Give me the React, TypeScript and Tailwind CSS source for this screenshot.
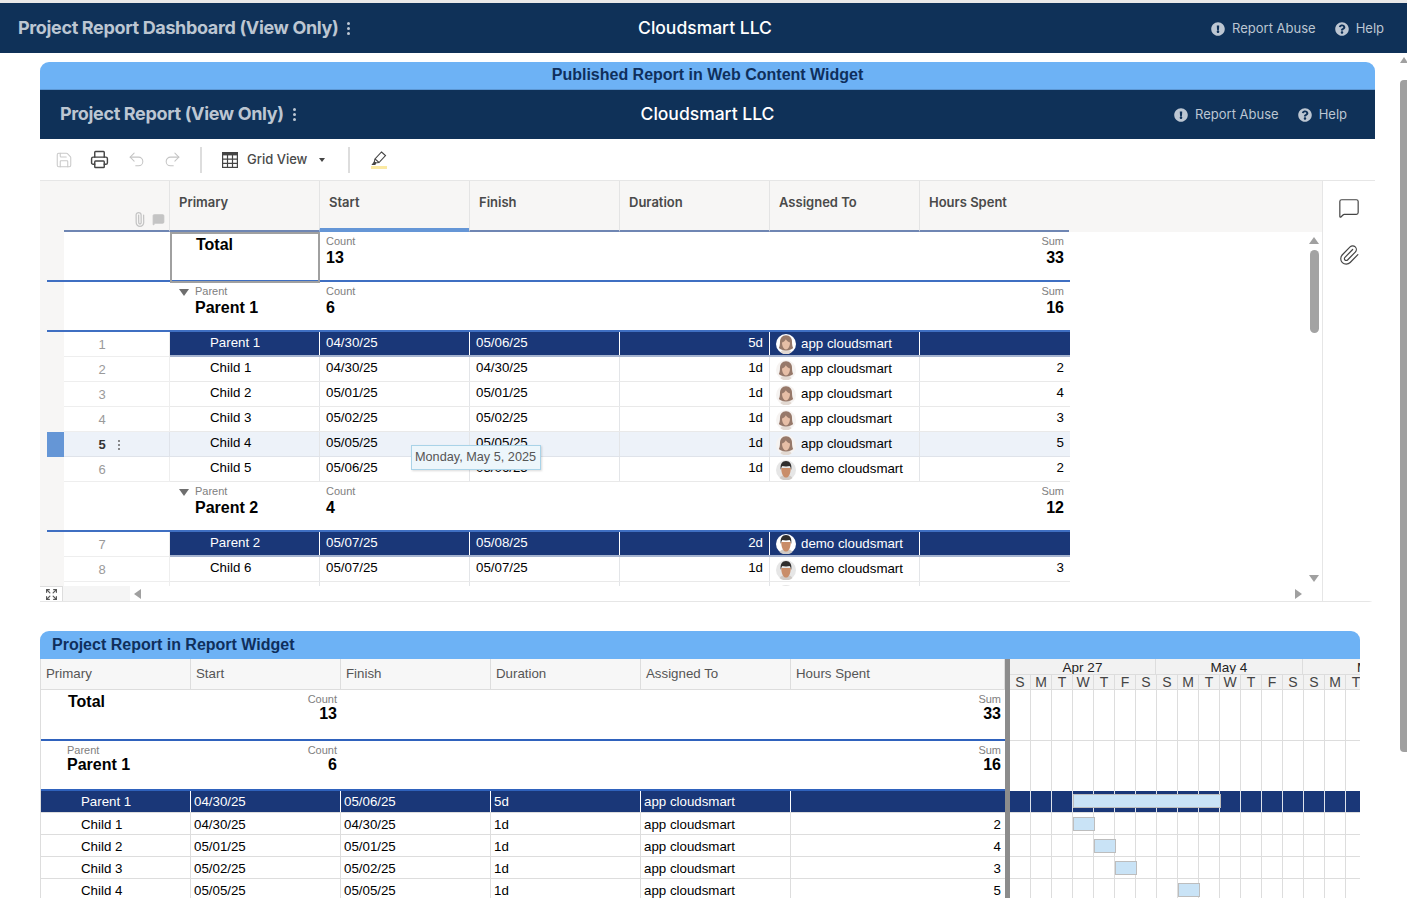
import { Expand, MessageSquare, Paperclip, Printer, Redo2, Save, Undo2 } from "lucide-react";
import { FaExclamationCircle, FaQuestionCircle } from "react-icons/fa";

type Row = { n: number; name: string; start: string; finish: string; dur: string; who: "app" | "demo"; hours?: string; parent?: boolean; active?: boolean; clipped?: boolean };

const topRows: Row[] = [
  { n: 1, name: "Parent 1", start: "04/30/25", finish: "05/06/25", dur: "5d", who: "app", parent: true },
  { n: 2, name: "Child 1", start: "04/30/25", finish: "04/30/25", dur: "1d", who: "app", hours: "2" },
  { n: 3, name: "Child 2", start: "05/01/25", finish: "05/01/25", dur: "1d", who: "app", hours: "4" },
  { n: 4, name: "Child 3", start: "05/02/25", finish: "05/02/25", dur: "1d", who: "app", hours: "3" },
  { n: 5, name: "Child 4", start: "05/05/25", finish: "05/05/25", dur: "1d", who: "app", hours: "5", active: true },
  { n: 6, name: "Child 5", start: "05/06/25", finish: "05/06/25", dur: "1d", who: "demo", hours: "2" },
];

// the last row only peeks out above the bottom strip, its text stays out of view
const lowerRows: Row[] = [
  { n: 7, name: "Parent 2", start: "05/07/25", finish: "05/08/25", dur: "2d", who: "demo", parent: true },
  { n: 8, name: "Child 6", start: "05/07/25", finish: "05/07/25", dur: "1d", who: "demo", hours: "3" },
  { n: 9, name: "", start: "", finish: "", dur: "", who: "demo", clipped: true },
];

const days = ["S", "M", "T", "W", "T", "F", "S", "S", "M", "T", "W", "T", "F", "S", "S", "M", "T"];

function Avatar({ who, ring, className }: { who: "app" | "demo"; ring?: boolean; className?: string }) {
  const bg = ring ? "#ffffff" : who === "app" ? "#f6f3f1" : "#e6e6e6";
  return (
    <svg width="20" height="20" viewBox="0 0 20 20" className={`shrink-0 ${className ?? ""}`}>
      <circle cx="10" cy="10" r="10" fill={bg} />
      {who === "app" ? (
        <>
          <path d="M4.500 18.600c.8-2.400 2.800-3.400 5.500-3.400s4.700 1 5.500 3.400a10 10 0 0 1-11 0z" fill="#e2d9d2" />
          <path d="M10 1.200c-4 0-6 3-6 6.600 0 3-.5 5-1.200 6.200 1.600 1.600 4.200 2.400 7.200 2.400s5.600-.8 7.200-2.400c-.7-1.200-1.200-3.200-1.200-6.200 0-3.600-2-6.600-6-6.600z" fill="#97796a" />
          <path d="M6 8.400c0 4 2 7 4 7s4-3 4-7c-1.800-.4-3.400-1.600-4.200-3.200-.6 1.600-2 2.800-3.800 3.200z" fill="#e6bea6" />
        </>
      ) : (
        <>
          <path d="M3.500 18c1-2 3.400-3 6.500-3s5.500 1 6.500 3a10 10 0 0 1-13 0z" fill="#cfcac6" />
          <path d="M5.200 8c0 5.600 2.200 9.600 4.800 9.600s4.800-4 4.800-9.600z" fill="#c98d69" />
          <path d="M4.800 10C3.800 4 6.400 1 10 1s6.200 3 5.200 9c-.3-2-.9-3.400-1.600-3.900-2 .6-5.200.6-7.200 0-.7.500-1.300 1.900-1.600 3.900z" fill="#2f2d2c" />
        </>
      )}
    </svg>
  );
}

function NavBar({ title, px, shift }: { title: string; px: string; shift: string }) {
  return (
    <div className={`grid grid-cols-[1fr_auto_1fr] items-center h-full bg-[#0f3158] ${px}`}>
      <div className="flex items-center gap-[7px] pb-[2px] font-['Inter',sans-serif] text-[18px] font-bold tracking-[-0.35px] text-[#bcc6d2]">
        {title}
        <span className="flex flex-col gap-[2px] ml-[2px] mt-[2px]">
          <i className="w-[3px] h-[3px] rounded-full bg-[#bcc6d2]" />
          <i className="w-[3px] h-[3px] rounded-full bg-[#bcc6d2]" />
          <i className="w-[3px] h-[3px] rounded-full bg-[#bcc6d2]" />
        </span>
      </div>
      <div className={`font-['Inter',sans-serif] text-[17.500px] font-medium text-white ${shift}`}>Cloudsmart LLC</div>
      <div className="flex justify-end items-center gap-[19px] pt-px font-['Inter',sans-serif] text-[13px] text-[#bcc6d2]">
        <span className="flex items-center gap-[7px]">
          <FaExclamationCircle size={14} />
          Report Abuse
        </span>
        <span className="flex items-center gap-[7px]">
          <FaQuestionCircle size={14} />
          Help
        </span>
      </div>
    </div>
  );
}

function Toolbar() {
  return (
    <div className="flex items-center h-[42px] pl-[15px] bg-white border-b border-[#e6e6e6]">
      <Save size={18} strokeWidth={1.4} className="text-[#c9c9c9]" />
      <Printer size={19} strokeWidth={1.8} className="ml-[17px] text-[#444444]" />
      <Undo2 size={19} strokeWidth={1.3} className="ml-[18px] text-[#c4c4c4]" />
      <Redo2 size={19} strokeWidth={1.3} className="ml-[17px] text-[#c4c4c4]" />
      <div className="ml-[18px] w-[2px] h-[26px] bg-[#dddddd]" />
      <svg width="18" height="18" viewBox="0 0 18 18" fill="none" stroke="#444444" strokeWidth="1.200" className="ml-[19px]">
        <rect x="1.600" y="1.600" width="14.800" height="14.800" />
        <path d="M1.600 3.200h14.800" strokeWidth="2.400" />
        <path d="M1.600 8.200h14.800M1.600 12.300h14.800M6.500 4v12.400M11.500 4v12.400" />
      </svg>
      <span className="ml-[8px] font-['Inter',sans-serif] text-[13px] font-medium text-[#4a4a4a]">Grid View</span>
      <span className="ml-[12px] w-0 h-0 border-x-[3px] border-x-transparent border-t-[4px] border-t-[#444444]" />
      <div className="ml-[23px] w-[2px] h-[26px] bg-[#dddddd]" />
      <div className="ml-[20px] flex flex-col items-center">
        <svg width="17" height="15" viewBox="0 0 17 15" fill="none" stroke="#444444" strokeWidth="1.100">
          <path d="M11.500 1l4 3.500-6.500 7-4-3.500z" />
          <path d="M5 8l-.7 3 1.200 1 3.500-.5" />
          <path d="M4.300 11l-1.800 2.500h2.500l.5-1.500z" fill="#444444" />
        </svg>
        <i className="w-[16px] h-[3px] bg-[#fbe9a3]" />
      </div>
    </div>
  );
}

function GroupRow({ label, name, count, sum }: { label?: string; name: string; count: string; sum: string }) {
  const isTotal = !label;
  return (
    <div className="flex h-[50px] shrink-0 font-['Liberation_Sans',sans-serif]">
      <div className="w-[17px] h-full bg-[#f7f6f5] border-b-2 border-[#3f6fc2]" />
      <div className="flex w-[1006px] bg-white border-b-2 border-[#3f6fc2]">
        <div className="w-[106px]" />
        {isTotal ? (
          <div className="relative w-[150px] h-[51px] border-2 border-[#a0a0a0] pl-[24px] pt-[1px] text-[16px] font-bold text-black leading-[20px]">{name}</div>
        ) : (
          <div className="w-[150px] pl-[9px] flex">
            <span className="mt-[7px] w-0 h-0 border-x-[5px] border-x-transparent border-t-[7px] border-t-[#6e6e6e]" />
            <div className="ml-[6px] pt-[3px]">
              <div className="text-[11px] leading-[12px] text-[#808080]">{label}</div>
              <div className="mt-px text-[16px] leading-[20px] font-bold text-black">{name}</div>
            </div>
          </div>
        )}
        <div className="w-[150px] pl-[6px] pt-[3px]">
          <div className="text-[11px] leading-[12px] text-[#808080]">Count</div>
          <div className="mt-px text-[16px] leading-[20px] font-bold text-black">{count}</div>
        </div>
        <div className="w-[600px] pr-[6px] pt-[3px] text-right">
          <div className="text-[11px] leading-[12px] text-[#808080]">Sum</div>
          <div className="mt-px text-[16px] leading-[20px] font-bold text-black">{sum}</div>
        </div>
      </div>
    </div>
  );
}

function DataRow({ row }: { row: Row }) {
  const cell = row.parent
    ? "border-r border-white text-white"
    : "border-r border-[#e3e5e8] text-black";
  const base = row.parent ? "bg-[#1a3778] border-b-2 border-b-[#a5b3cf]" : row.active ? "bg-[#edf2f9] border-b border-[#dfe3ea]" : "bg-white border-b border-[#e9e9e9]";
  return (
    <div className="flex h-[25px] shrink-0 font-['Liberation_Sans',sans-serif] text-[13.300px]">
      <div className={`w-[17px] ${row.active ? "bg-[#6596d6] border-b border-[#6596d6]" : "bg-[#f7f6f5]"}`} />
      <div className={`flex items-center w-[106px] pt-[2px] border-b border-r ${row.active ? "bg-[#edf2f9] border-[#dfe3ea]" : "bg-white border-[#eeeeee]"}`}>
        {!row.clipped && (
          <span className={`w-[76px] text-center text-[13px] ${row.active ? "font-bold text-[#333333]" : "text-[#9a9a9a]"}`}>{row.n}</span>
        )}
        {row.active && (
          <span className="-ml-[22px] flex flex-col gap-[2px]">
            <i className="w-[2px] h-[2px] rounded-full bg-[#666666]" />
            <i className="w-[2px] h-[2px] rounded-full bg-[#666666]" />
            <i className="w-[2px] h-[2px] rounded-full bg-[#666666]" />
          </span>
        )}
      </div>
      <div className={`flex w-[900px] ${base}`}>
        <div className={`w-[150px] pl-[40px] leading-[22px] ${cell}`}>{row.name}</div>
        <div className={`w-[150px] pl-[6px] leading-[22px] ${cell}`}>{row.start}</div>
        <div className={`w-[150px] pl-[6px] leading-[22px] ${cell}`}>{row.finish}</div>
        <div className={`w-[150px] pr-[6px] text-right leading-[22px] ${cell}`}>{row.dur}</div>
        <div className={`flex items-center gap-[5px] w-[150px] pl-[6px] ${cell}`}>
          <Avatar who={row.who} ring={row.parent} className={row.parent ? "" : "mt-[2px]"} />
          {!row.clipped && `${row.who} cloudsmart`}
        </div>
        <div className={`w-[150px] pr-[6px] text-right leading-[22px] ${row.parent ? "text-white" : "text-black"}`}>{row.hours}</div>
      </div>
    </div>
  );
}

function SheetGrid() {
  const heads = ["Primary", "Start", "Finish", "Duration", "Assigned To", "Hours Spent"];
  return (
    <div className="flex h-[421px] border-b border-[#e6e6e6] rounded-br-[6px]">
      <div className="flex-1 flex flex-col min-w-0">
        <div className="flex h-[51px] shrink-0 bg-[#f7f6f5]">
          <div className="w-[24px]" />
          <div className="relative w-[105px] border-b-2 border-[#6f86b3]">
            <Paperclip size={15} strokeWidth={2} className="absolute left-[68px] top-[31px] -rotate-45 text-[#c4c4c4]" />
            <MessageSquare size={13} fill="#c4c4c4" strokeWidth={1.5} className="absolute left-[88px] top-[32px] text-[#c4c4c4]" />
          </div>
          {heads.map((h, i) => (
            <div
              key={h}
              className={`w-[150px] pl-[9px] pt-[12px] font-['Inter',sans-serif] text-[13px] font-semibold text-[#4a4a4a] border-l border-[#e4e4e4] ${i === 1 ? "border-b-[4px] border-b-[#6596d6]" : "border-b-2 border-b-[#6f86b3]"}`}
            >
              {h}
            </div>
          ))}
        </div>
        <div className="flex flex-1 min-h-0 relative">
          <div className="w-[7px] bg-[#f7f6f5]" />
          <div className="w-[1023px] h-[354px] overflow-hidden flex flex-col">
            <GroupRow name="Total" count="13" sum="33" />
            <GroupRow label="Parent" name="Parent 1" count="6" sum="16" />
            {topRows.map((r) => (
              <DataRow key={r.n} row={r} />
            ))}
            <GroupRow label="Parent" name="Parent 2" count="4" sum="12" />
            {lowerRows.map((r) => (
              <DataRow key={r.n} row={r} />
            ))}
          </div>
          <div className="flex-1" />
          <div className="w-[12px] mr-[2px] h-[354px] flex flex-col items-center pt-[5px]">
            <span className="w-0 h-0 border-x-[5px] border-x-transparent border-b-[7px] border-b-[#a0a0a0]" />
            <span className="mt-[6px] w-[9px] h-[83px] rounded-[5px] bg-[#a3a3a3]" />
            <span className="mt-auto mb-[4px] w-0 h-0 border-x-[5px] border-x-transparent border-t-[7px] border-t-[#a0a0a0]" />
          </div>
          <div className="absolute left-[371px] top-[213px] w-[130px] h-[25px] border border-[#a9d3e8] bg-[#edf6fb] shadow-[1px_1px_2px_rgba(0,0,0,0.15)] pl-[3px] font-['Liberation_Sans',sans-serif] text-[12.700px] leading-[22px] text-[#555555]">
            Monday, May 5, 2025
          </div>
        </div>
        <div className="flex items-center h-[15px] shrink-0">
          <div className="flex items-center justify-center w-[23px] h-full border-r border-t border-[#dddddd] bg-white">
            <Expand size={13} strokeWidth={2.2} className="text-[#555555]" />
          </div>
          <div className="w-[67px] h-full bg-[#f5f5f5]" />
          <span className="ml-[4px] w-0 h-0 border-y-[5px] border-y-transparent border-r-[7px] border-r-[#a0a0a0]" />
          <span className="ml-auto mr-[20px] w-0 h-0 border-y-[5px] border-y-transparent border-l-[7px] border-l-[#a0a0a0]" />
        </div>
      </div>
      <div className="w-[53px] shrink-0 border-l border-[#e6e6e6] bg-white flex flex-col items-center pt-[16px]">
        <MessageSquare size={22} strokeWidth={1.3} className="text-[#444444]" />
        <Paperclip size={22} strokeWidth={1.3} className="mt-[25px] text-[#444444]" />
      </div>
    </div>
  );
}

function Gantt() {
  const dayLines = (bg: string, line: string, h: string) => (
    <div className={`flex ${h} ${bg}`}>
      {days.map((d, i) => (
        <div key={i} className={`w-[21px] shrink-0 border-r ${line}`} />
      ))}
    </div>
  );
  return (
    <div className="flex-1 min-w-0 overflow-hidden relative font-['Liberation_Sans',sans-serif]">
      <div className="flex h-[15px] bg-[#f2f2f2] text-[13.500px] leading-[18px] text-[#222222] text-center">
        <div className="w-[146px] shrink-0 border-r border-[#dddddd]">Apr 27</div>
        <div className="w-[147px] shrink-0 border-r border-[#dddddd]">May 4</div>
        <div className="w-[147px] shrink-0 pl-[54px] text-left">May 11</div>
      </div>
      <div className="flex h-[16px] bg-[#f2f2f2] border-b border-[#dddddd] text-[14px] leading-[15px] text-[#444444] text-center">
        {days.map((d, i) => (
          <div key={i} className="w-[21px] shrink-0 border-r border-t border-[#dddddd]">{d}</div>
        ))}
      </div>
      <div className="border-b border-[#dddddd]">{dayLines("bg-white", "border-[#dddddd]", "h-[50px]")}</div>
      <div>{dayLines("bg-white", "border-[#dddddd]", "h-[50px]")}</div>
      <div className="border-b border-[#dddddd]">{dayLines("bg-[#1a3778]", "border-[#dde2ec]", "h-[21px]")}</div>
      {[0, 1, 2, 3].map((i) => (
        <div key={i} className="border-b border-[#dddddd]">{dayLines("bg-white", "border-[#dddddd]", "h-[21px]")}</div>
      ))}
      <div className="absolute left-[63px] top-[135px] w-[148px] h-[14px] border border-[#bdbdbd] bg-[#c9e3f6]" />
      <div className="absolute left-[63px] top-[158px] w-[22px] h-[14px] border border-[#bdbdbd] bg-[#c9e3f6]" />
      <div className="absolute left-[84px] top-[180px] w-[22px] h-[14px] border border-[#bdbdbd] bg-[#c9e3f6]" />
      <div className="absolute left-[105px] top-[202px] w-[22px] h-[14px] border border-[#bdbdbd] bg-[#c9e3f6]" />
      <div className="absolute left-[168px] top-[224px] w-[22px] h-[14px] border border-[#bdbdbd] bg-[#c9e3f6]" />
    </div>
  );
}

function ReportTable() {
  const heads = ["Primary", "Start", "Finish", "Duration", "Assigned To", "Hours Spent"];
  const rows = topRows.slice(0, 5);
  const group = (label: string | null, name: string, count: string, sum: string, total: boolean) => (
    <div className={`flex h-[51px] border-b-2 border-[#2f62bd] text-black ${total ? "-mb-px" : ""}`}>
      <div className={`w-[150px] ${total ? "pl-[27px] pt-[3px]" : "pl-[26px] pt-[4px]"}`}>
        {label && <div className="text-[11px] leading-[12px] text-[#808080]">{label}</div>}
        <div className="text-[16px] leading-[18px] font-bold">{name}</div>
      </div>
      <div className={`w-[146px] text-right ${total ? "pt-[3px]" : "pt-[4px]"}`}>
        <div className="text-[11px] leading-[12px] text-[#808080]">Count</div>
        <div className="text-[16px] leading-[18px] font-bold">{count}</div>
      </div>
      <div className={`flex-1 pr-[4px] text-right ${total ? "pt-[3px]" : "pt-[4px]"}`}>
        <div className="text-[11px] leading-[12px] text-[#808080]">Sum</div>
        <div className="text-[16px] leading-[18px] font-bold">{sum}</div>
      </div>
    </div>
  );
  return (
    <div className="w-[965px] shrink-0 border-l border-[#dddddd] font-['Liberation_Sans',sans-serif]">
      <div className="flex h-[31px] bg-[#f7f7f7] border-b border-[#dddddd] text-[13.300px] text-[#555555]">
        {heads.map((h, i) => (
          <div key={h} className={`pl-[5px] leading-[30px] border-r border-[#dddddd] ${i === 5 ? "flex-1" : "w-[150px]"}`}>
            {h}
          </div>
        ))}
      </div>
      {group(null, "Total", "13", "33", true)}
      {group("Parent", "Parent 1", "6", "16", false)}
      {rows.map((r) => {
        const line = r.parent ? "border-r border-white" : "border-r border-[#dddddd]";
        return (
          <div key={r.n} className={`flex h-[22px] text-[13.300px] border-b border-[#dddddd] ${r.parent ? "bg-[#1a3778] text-white leading-[21px]" : "bg-white text-black leading-[23px]"}`}>
            <div className={`w-[150px] pl-[40px] ${line}`}>{r.name}</div>
            <div className={`w-[150px] pl-[3px] ${line}`}>{r.start}</div>
            <div className={`w-[150px] pl-[3px] ${line}`}>{r.finish}</div>
            <div className={`w-[150px] pl-[3px] ${line}`}>{r.dur}</div>
            <div className={`w-[150px] pl-[3px] ${line}`}>{r.who} cloudsmart</div>
            <div className="flex-1 pr-[4px] text-right">{r.hours}</div>
          </div>
        );
      })}
    </div>
  );
}

export default function App() {
  return (
    <div className="h-[898px] overflow-hidden bg-white flex flex-col">
      <div className="h-[3px] shrink-0 bg-[#e9e9e9]" />
      <div className="h-[50px] shrink-0">
        <NavBar title="Project Report Dashboard (View Only)" px="pl-[18px] pr-[23px]" shift="ml-[8px]" />
      </div>
      <div className="flex flex-1 min-h-0">
        <div className="flex-1 min-w-0 pl-[40px] pt-[9px]">
          {/* Web content widget */}
          <div className="w-[1335px]">
            <div className="h-[28px] rounded-t-[9px] bg-[#6db2f5] border-b border-[#5c97d3] text-center font-['Liberation_Sans',sans-serif] text-[16px] font-bold leading-[25px] text-[#0f2f5c]">
              Published Report in Web Content Widget
            </div>
            <div className="h-[49px]">
              <NavBar title="Project Report (View Only)" px="pl-[20px] pr-[28px]" shift="ml-[8px]" />
            </div>
            <Toolbar />
            <SheetGrid />
          </div>
          {/* Report widget */}
          <div className="w-[1320px] mt-[29px]">
            <div className="h-[28px] pl-[12px] rounded-t-[9px] bg-[#6db2f5] font-['Liberation_Sans',sans-serif] text-[16px] font-bold leading-[27px] text-[#0f2f5c]">
              Project Report in Report Widget
            </div>
            <div className="flex">
              <ReportTable />
              <div className="w-[5px] shrink-0 bg-[#8c8c8c]" />
              <Gantt />
            </div>
          </div>
        </div>
        <div className="w-[7px] shrink-0 flex flex-col items-start pt-[4px]">
          <span className="w-0 h-0 border-x-[4px] border-x-transparent border-b-[6px] border-b-[#a0a0a0]" />
          <span className="mt-[17px] w-full h-[672px] rounded-l-[4px] bg-[#a0a0a0]" />
        </div>
      </div>
    </div>
  );
}
